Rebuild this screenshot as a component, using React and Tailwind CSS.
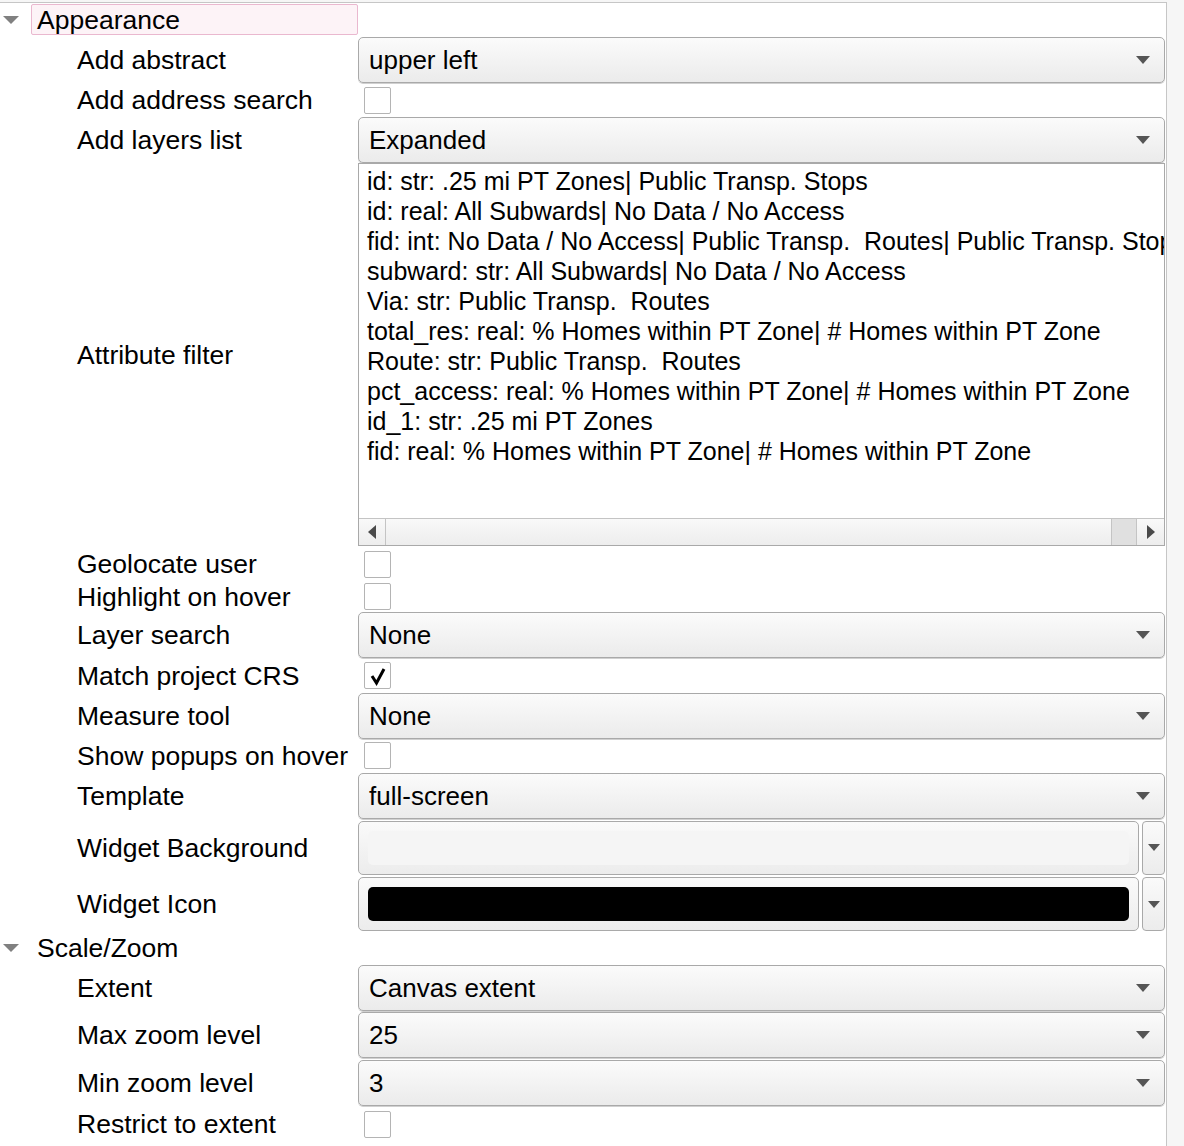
import React from "react";

const listLines = [
  "id: str: .25 mi PT Zones| Public Transp. Stops",
  "id: real: All Subwards| No Data / No Access",
  "fid: int: No Data / No Access| Public Transp.  Routes| Public Transp. Stops",
  "subward: str: All Subwards| No Data / No Access",
  "Via: str: Public Transp.  Routes",
  "total_res: real: % Homes within PT Zone| # Homes within PT Zone",
  "Route: str: Public Transp.  Routes",
  "pct_access: real: % Homes within PT Zone| # Homes within PT Zone",
  "id_1: str: .25 mi PT Zones",
  "fid: real: % Homes within PT Zone| # Homes within PT Zone",
];

function DownArrow({ className = "" }) {
  return (
    <svg width="14" height="8" viewBox="0 0 14 8" className={className}>
      <path d="M0 0 L14 0 L7 8 Z" fill="currentColor" />
    </svg>
  );
}

function Combo({ value }) {
  return (
    <div className="flex h-[46px] w-[807px] items-center justify-between rounded-[5px] border border-[#a9a9a9] bg-gradient-to-b from-[#fbfbfb] to-[#ebebeb] pl-[10px] pr-[14px] shadow-[0_1px_0_#d0d0d0]">
      <span>{value}</span>
      <DownArrow className="text-[#555]" />
    </div>
  );
}

function Check({ checked }) {
  return (
    <div className="ml-[6px] flex h-[27px] w-[27px] shrink-0 items-center justify-center rounded-[2px] border border-[#b4b4b4] bg-white">
      {checked && (
        <svg width="20" height="20" viewBox="0 0 20 20">
          <path d="M4 10 L8.5 17 L16 3" fill="none" stroke="#000" strokeWidth="3" strokeLinecap="butt" strokeLinejoin="miter" />
        </svg>
      )}
    </div>
  );
}

function ColorButton({ swatch }) {
  return (
    <div className="flex w-[807px] items-stretch gap-[3px]">
      <div className="flex h-[54px] flex-1 items-center rounded-[5px] border border-[#a9a9a9] bg-gradient-to-b from-[#fafafa] to-[#ececec] px-[9px]">
        <div className={`h-[34px] w-full rounded-[5px] ${swatch}`} />
      </div>
      <div className="flex h-[54px] w-[23px] items-center justify-center rounded-[4px] border border-[#a9a9a9] bg-gradient-to-b from-[#fafafa] to-[#ececec]">
        <svg width="12" height="7" viewBox="0 0 12 7">
          <path d="M0 0 L12 0 L6 7 Z" fill="#555" />
        </svg>
      </div>
    </div>
  );
}

function Row({ label, h, children }) {
  return (
    <div className={`grid grid-cols-[358px_807px] items-center overflow-visible ${h}`}>
      <div className="pl-[77px] whitespace-nowrap text-[26.5px]">{label}</div>
      <div className="flex items-center">{children}</div>
    </div>
  );
}

function Group({ title, boxed, h }) {
  return (
    <div className={`flex items-center ${h}`}>
      <svg width="16" height="8" viewBox="0 0 16 8" className="ml-[3px] mr-[12px]">
        <path d="M0 0 L16 0 L8 8 Z" fill="#808080" />
      </svg>
      {boxed ? (
        <div className="flex h-[31px] w-[327px] items-center rounded-[2px] border border-[#eab8cf] bg-[#fdf3f7] pl-[5px] text-[26.5px]">
          {title}
        </div>
      ) : (
        <div className="pl-[6px] text-[26.5px]">{title}</div>
      )}
    </div>
  );
}

function AttributeList() {
  return (
    <div className="flex h-[383px] w-[807px] flex-col border border-[#a9a9a9] bg-white">
      <div className="flex-1 overflow-hidden pl-[8px] pt-[2px] text-[25px] leading-[30px]">
        {listLines.map((l, i) => (
          <div key={i} className="whitespace-pre">{l}</div>
        ))}
      </div>
      <div className="flex h-[27px] border-t border-[#c4c4c4] bg-gradient-to-b from-[#f9f9f9] to-[#ededed]">
        <div className="flex w-[27px] items-center justify-center border-r border-[#c4c4c4]">
          <svg width="8" height="14" viewBox="0 0 8 14">
            <path d="M8 0 L8 14 L0 7 Z" fill="#4a4a4a" />
          </svg>
        </div>
        <div className="flex-1" />
        <div className="w-[26px] border-l border-r border-[#c4c4c4] bg-[#e0e0e0]" />
        <div className="flex w-[27px] items-center justify-center">
          <svg width="8" height="14" viewBox="0 0 8 14">
            <path d="M0 0 L8 7 L0 14 Z" fill="#4a4a4a" />
          </svg>
        </div>
      </div>
    </div>
  );
}

export default function App() {
  return (
    <div className="flex h-[1146px] w-[1184px] bg-[#f6f6f6] font-['Liberation_Sans',Arial,sans-serif] text-[26px] leading-[28px] text-black">
      <div className="mt-[2px] h-[1144px] w-[1167px] border-r border-t border-[#c6c6c6] bg-white">
        <Group title="Appearance" boxed h="h-[33px]" />
        <Row label="Add abstract" h="h-[48px]"><Combo value="upper left" /></Row>
        <Row label="Add address search" h="h-[32px]"><Check /></Row>
        <Row label="Add layers list" h="h-[47px]"><Combo value="Expanded" /></Row>
        <Row label="Attribute filter" h="h-[383px]"><AttributeList /></Row>
        <Row label="Geolocate user" h="h-[36px]"><Check /></Row>
        <Row label="Highlight on hover" h="h-[29px]"><Check /></Row>
        <Row label="Layer search" h="h-[48px]"><Combo value="None" /></Row>
        <Row label="Match project CRS" h="h-[33px]"><Check checked /></Row>
        <Row label="Measure tool" h="h-[47px]"><Combo value="None" /></Row>
        <Row label="Show popups on hover" h="h-[33px]"><Check /></Row>
        <Row label="Template" h="h-[47px]"><Combo value="full-screen" /></Row>
        <Row label="Widget Background" h="h-[57px]"><ColorButton swatch="bg-[#f5f5f5]" /></Row>
        <Row label="Widget Icon" h="h-[56px]"><ColorButton swatch="bg-black" /></Row>
        <Group title="Scale/Zoom" h="h-[32px]" />
        <Row label="Extent" h="h-[47px]"><Combo value="Canvas extent" /></Row>
        <Row label="Max zoom level" h="h-[48px]"><Combo value="25" /></Row>
        <Row label="Min zoom level" h="h-[48px]"><Combo value="3" /></Row>
        <Row label="Restrict to extent" h="h-[34px]"><Check /></Row>
      </div>
    </div>
  );
}
